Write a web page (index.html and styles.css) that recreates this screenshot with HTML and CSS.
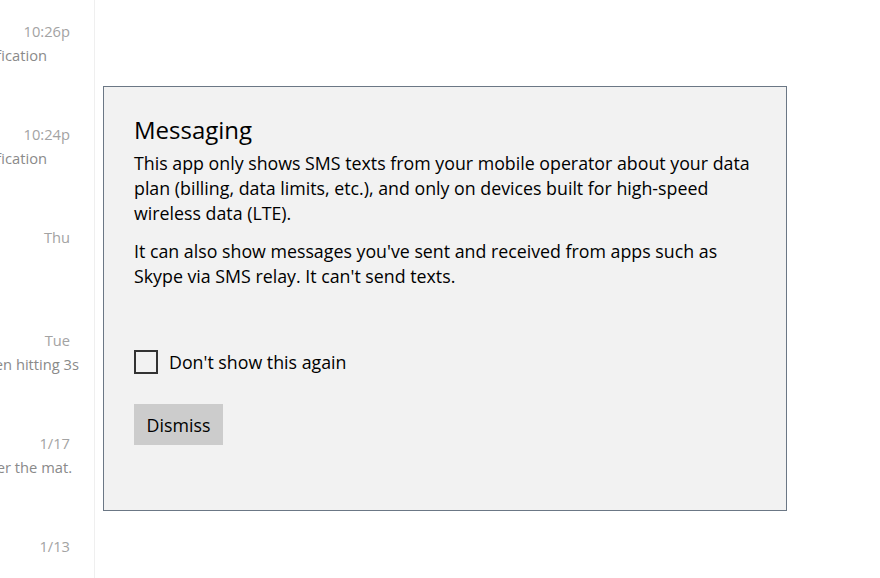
FILE: index.html
```html
<!DOCTYPE html>
<html lang="en">

<head>
    <meta charset="UTF-8">
    <meta name="viewport" content="width=device-width, initial-scale=1.0">
    <title>Messaging</title>
    <link rel="stylesheet" href="styles.css">
</head>

<body>
    <div class="app">
        <!-- conversation list, mostly hidden behind the dialog -->
        <aside class="threads">
            <div class="thread">
                <div class="time">10:26p</div>
                <div class="preview"><span>Data notification</span></div>
            </div>
            <div class="thread">
                <div class="time">10:24p</div>
                <div class="preview"><span>Data notification</span></div>
            </div>
            <div class="thread">
                <div class="time">Thu</div>
                <div class="preview"></div>
            </div>
            <div class="thread">
                <div class="time">Tue</div>
                <div class="preview"><span>Been hitting 3s</span></div>
            </div>
            <div class="thread">
                <div class="time">1/17</div>
                <div class="preview"><span>Under the mat.</span></div>
            </div>
            <div class="thread">
                <div class="time">1/13</div>
                <div class="preview"></div>
            </div>
        </aside>

        <main class="content">
            <div class="dialog">
                <h1 class="dialog-title">Messaging</h1>
                <p>This app only shows SMS texts from your mobile operator about your data plan (billing, data limits, etc.), and only on devices built for high-speed wireless data (LTE).</p>
                <p>It can also show messages you've sent and received from apps such as Skype via SMS relay. It can't send texts.</p>

                <label class="check">
                    <span class="box"></span>
                    <span>Don't show this again</span>
                </label>

                <button class="dismiss" type="button">Dismiss</button>
            </div>
        </main>
    </div>
</body>

</html>
```

FILE: styles.css
```css
body {
    font-family: "Open Sans", "Noto Sans", sans-serif;
    margin: 0;
    padding: 0;
    background: #fff;
    color: #000;
}

.app {
    display: flex;
    height: 578px;
}

.threads {
    width: 95px;
    flex-shrink: 0;
    border-right: 1px solid #efefef;
    overflow: hidden;
    padding-top: 19px;
    box-sizing: border-box;
}

.thread {
    width: 70px;
    height: 103px;
    font-size: 14.7px;
    line-height: 24px;
}

.time {
    text-align: right;
    color: #a3a3a3;
}

/* flex-end lets the long preview spill out to the left */
.preview {
    display: flex;
    justify-content: flex-end;
    white-space: nowrap;
    color: #8a8a8a;
    height: 24px;
}

.thread:nth-child(1) .preview,
.thread:nth-child(2) .preview {
    margin-right: 23px;
}

.thread:nth-child(4) .preview {
    margin-right: -9px;
}

.thread:nth-child(5) .preview {
    margin-right: -2px;
}

.content {
    flex: 1;
    padding: 86px 0 0 8px;
}

.dialog {
    width: 684px;
    height: 425px;
    border: 1px solid #6b7785;
    background: #f2f2f2;
    padding: 27px 30px 0 30px;
    box-sizing: border-box;
}

.dialog-title {
    font-size: 24px;
    font-weight: normal;
    line-height: 32px;
    margin: 0 0 5px 0;
}

.dialog p {
    font-size: 17.8px;
    line-height: 25px;
    margin: 0 0 13px 0;
}

.check {
    display: flex;
    align-items: center;
    gap: 11px;
    font-size: 17.8px;
    margin-top: 61px;
}

.box {
    width: 24px;
    height: 24px;
    border: 2px solid #333;
    box-sizing: border-box;
    background: #f2f2f2;
}

.dismiss {
    display: block;
    margin-top: 30px;
    background-color: #cccccc;
    border: none;
    font-family: inherit;
    font-size: 17.8px;
    color: #000;
    width: 89px;
    height: 41px;
    padding: 0;
}
```
